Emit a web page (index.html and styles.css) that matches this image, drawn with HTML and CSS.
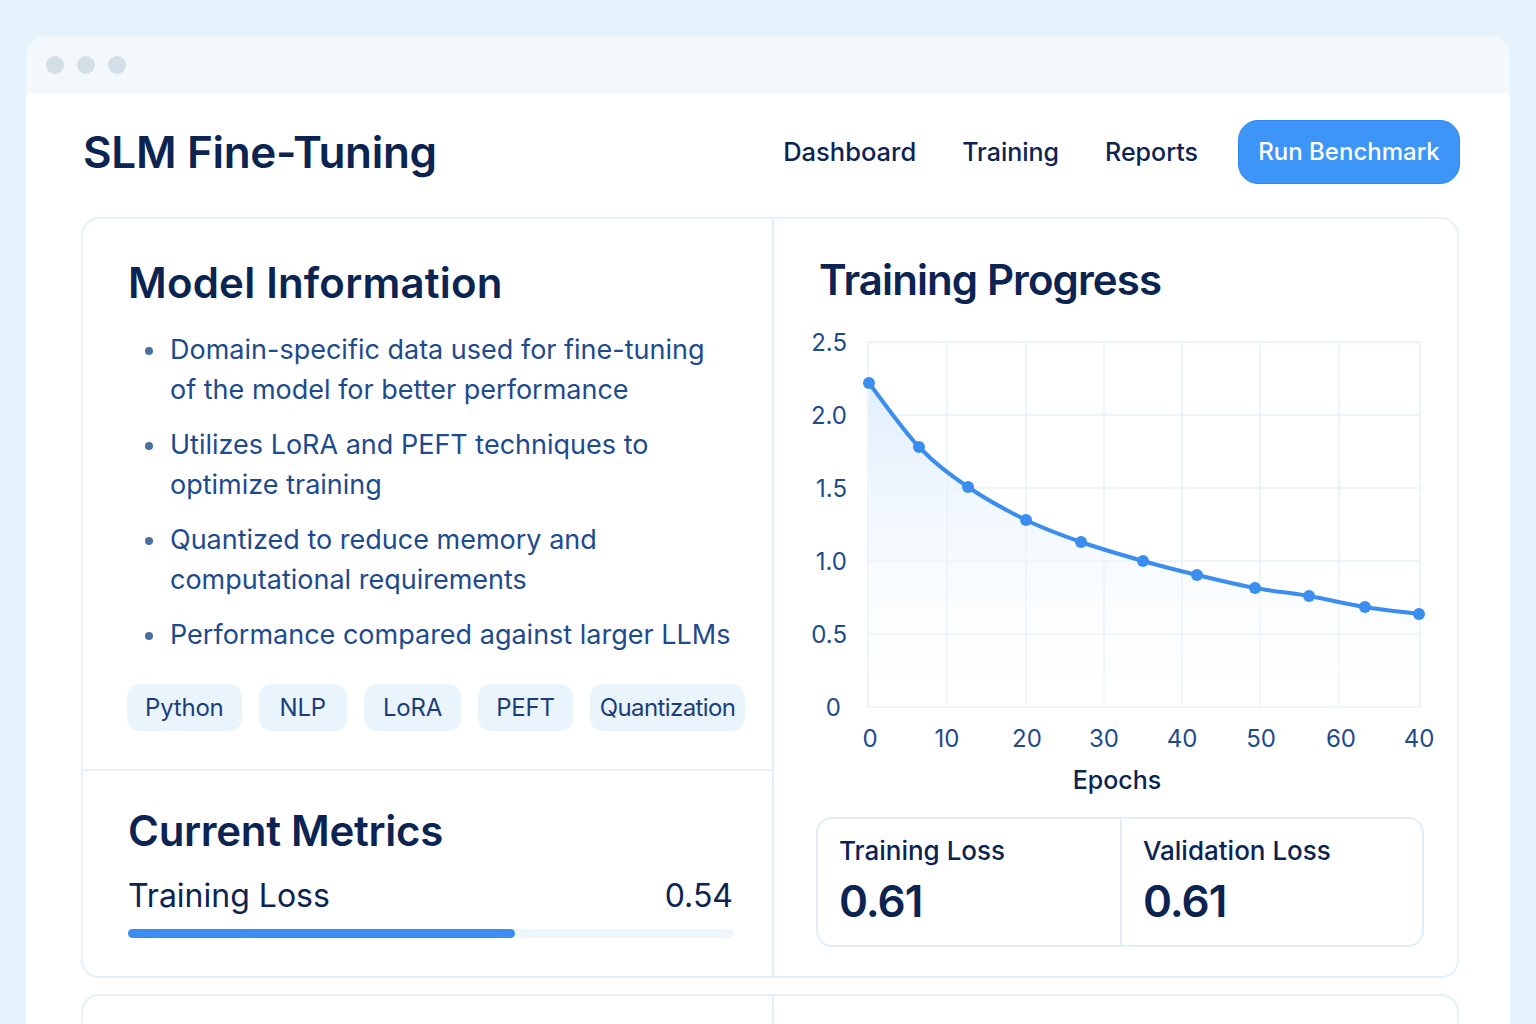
FILE: index.html
```html
<!DOCTYPE html>
<html lang="en">
<head>
<meta charset="utf-8">
<title>SLM Fine-Tuning</title>
<link rel="stylesheet" href="styles.css">
</head>
<body>
<div class="window">
  <div class="titlebar">
    <span class="dot"></span><span class="dot"></span><span class="dot"></span>
  </div>
  <header class="header">
    <h1 class="title">SLM Fine-Tuning</h1>
    <nav class="nav">
      <a class="nav-link">Dashboard</a>
      <a class="nav-link">Training</a>
      <a class="nav-link">Reports</a>
      <button class="btn">Run Benchmark</button>
    </nav>
  </header>

  <section class="card">
    <div class="col-left">
      <div class="panel info">
        <h2 class="panel-title">Model Information</h2>
        <ul class="bullets">
          <li>Domain-specific data used for fine-tuning of the model for better performance</li>
          <li>Utilizes LoRA and PEFT techniques to optimize training</li>
          <li>Quantized to reduce memory and computational requirements</li>
          <li>Performance compared against larger LLMs</li>
        </ul>
        <div class="tags">
          <span class="tag">Python</span>
          <span class="tag tag-nlp">NLP</span>
          <span class="tag tag-lora">LoRA</span>
          <span class="tag">PEFT</span>
          <span class="tag tag-quant">Quantization</span>
        </div>
      </div>
      <div class="panel metrics">
        <h2 class="panel-title">Current Metrics</h2>
        <div class="metric-row">
          <span>Training Loss</span>
          <span>0.54</span>
        </div>
        <div class="bar"><div class="bar-fill" style="width:64%"></div></div>
      </div>
    </div>

    <div class="col-right">
      <h2 class="panel-title progress-title">Training Progress</h2>
      <svg class="chart" width="687" height="475" viewBox="0 0 687 475">
        <defs>
          <linearGradient id="area" x1="0" y1="0" x2="0" y2="1">
            <stop offset="0" stop-color="#dcecfc" stop-opacity="0.9"/>
            <stop offset="1" stop-color="#ffffff" stop-opacity="0.2"/>
          </linearGradient>
        </defs>
        <g class="grid">
          <line x1="95" y1="17" x2="647" y2="17"/>
          <line x1="95" y1="90" x2="647" y2="90"/>
          <line x1="95" y1="163" x2="647" y2="163"/>
          <line x1="95" y1="236" x2="647" y2="236"/>
          <line x1="95" y1="309" x2="647" y2="309"/>
          <line x1="95" y1="382" x2="647" y2="382"/>
          <line x1="95" y1="17" x2="95" y2="382"/>
          <line x1="174" y1="17" x2="174" y2="382"/>
          <line x1="253" y1="17" x2="253" y2="382"/>
          <line x1="331" y1="17" x2="331" y2="382"/>
          <line x1="409" y1="17" x2="409" y2="382"/>
          <line x1="487" y1="17" x2="487" y2="382"/>
          <line x1="566" y1="17" x2="566" y2="382"/>
          <line x1="647" y1="17" x2="647" y2="382"/>
        </g>
        <path class="area" d="M96,58 C104.3,68.7 129.5,104.7 146,122 C162.5,139.3 177.2,149.8 195,162 C212.8,174.2 234.2,185.8 253,195 C271.8,204.2 288.5,210.2 308,217 C327.5,223.8 350.7,230.5 370,236 C389.3,241.5 405.3,245.5 424,250 C442.7,254.5 463.3,259.5 482,263 C500.7,266.5 517.7,267.8 536,271 C554.3,274.2 573.7,279 592,282 C610.3,285 637,287.8 646,289 L646,382 L96,382 Z"/>
        <path class="line" d="M96,58 C104.3,68.7 129.5,104.7 146,122 C162.5,139.3 177.2,149.8 195,162 C212.8,174.2 234.2,185.8 253,195 C271.8,204.2 288.5,210.2 308,217 C327.5,223.8 350.7,230.5 370,236 C389.3,241.5 405.3,245.5 424,250 C442.7,254.5 463.3,259.5 482,263 C500.7,266.5 517.7,267.8 536,271 C554.3,274.2 573.7,279 592,282 C610.3,285 637,287.8 646,289"/>
        <g class="pts">
          <circle cx="96" cy="58" r="6"/>
          <circle cx="146" cy="122" r="6"/>
          <circle cx="195" cy="162" r="6"/>
          <circle cx="253" cy="195" r="6"/>
          <circle cx="308" cy="217" r="6"/>
          <circle cx="370" cy="236" r="6"/>
          <circle cx="424" cy="250" r="6"/>
          <circle cx="482" cy="263" r="6"/>
          <circle cx="536" cy="271" r="6"/>
          <circle cx="592" cy="282" r="6"/>
          <circle cx="646" cy="289" r="6"/>
        </g>
        <g class="ylab">
          <text x="74" y="17">2.5</text>
          <text x="74" y="90">2.0</text>
          <text x="74" y="163">1.5</text>
          <text x="74" y="236">1.0</text>
          <text x="74" y="309">0.5</text>
          <text x="68" y="382">0</text>
        </g>
        <g class="xlab">
          <text x="97" y="413">0</text>
          <text x="174" y="413">10</text>
          <text x="254" y="413">20</text>
          <text x="331" y="413">30</text>
          <text x="409" y="413">40</text>
          <text x="488" y="413">50</text>
          <text x="568" y="413">60</text>
          <text x="646" y="413">40</text>
        </g>
        <text class="axis-title" x="344" y="455">Epochs</text>
      </svg>
      <div class="stats">
        <div class="stat">
          <div class="stat-label">Training Loss</div>
          <div class="stat-value">0.61</div>
        </div>
        <div class="stat">
          <div class="stat-label">Validation Loss</div>
          <div class="stat-value">0.61</div>
        </div>
      </div>
    </div>
  </section>

  <section class="card card-next">
    <div class="col-left"></div>
    <div class="col-right"></div>
  </section>
</div>
</body>
</html>
```
FILE: styles.css
```css
* { box-sizing: border-box; }
html, body { margin: 0; padding: 0; }
body {
  background: #e7f3fc;
  font-family: Inter, "Noto Sans", "Liberation Sans", sans-serif;
  color: #0c2452;
  height: 1024px;
  overflow: hidden;
}
.window {
  margin: 37px 26px 0;
  height: 1000px;
  background: #ffffff;
  border-radius: 18px 18px 0 0;
  overflow: hidden;
}
.titlebar {
  height: 56px;
  background: #f3f8fd;
  display: flex;
  align-items: center;
  gap: 13px;
  padding-left: 20px;
}
.dot {
  width: 18px;
  height: 18px;
  border-radius: 50%;
  background: #d2dfe9;
}
.header {
  display: flex;
  align-items: center;
  justify-content: space-between;
  padding: 27px 50px 0 57px;
  height: 90px;
}
.title {
  margin: 0;
  font-size: 44px;
  font-weight: 600;
  letter-spacing: -0.3px;
  color: #0c2452;
}
.nav {
  display: flex;
  align-items: center;
}
.nav-link {
  font-size: 25px;
  font-weight: 500;
  color: #0c2452;
  margin-right: 46px;
}
.nav-link:first-child { font-size: 25.5px; }
.nav-link:nth-child(3) { margin-right: 40px; }
.btn {
  height: 64px;
  width: 222px;
  border-radius: 20px;
  background: #3d95f7;
  border: 1.5px solid #2e86ee;
  color: #ffffff;
  font-family: inherit;
  font-size: 24px;
  font-weight: 500;
}
.card {
  margin: 34px 51px 0 55px;
  border: 2px solid #e4f1fb;
  border-radius: 18px;
  display: grid;
  grid-template-columns: 691px 1fr;
  height: 761px;
}
.col-left {
  border-right: 2px solid #e4f1fb;
  display: flex;
  flex-direction: column;
}
.panel-title {
  margin: 0;
  font-size: 42px;
  font-weight: 600;
  letter-spacing: -0.3px;
  color: #0c2452;
}
.info {
  padding: 38px 20px 0 45px;
  height: 552px;
  border-bottom: 2px solid #e4f1fb;
}
.info .panel-title { letter-spacing: 0.2px; }
.bullets {
  margin: 22px 0 0;
  padding: 0 0 0 42px;
  list-style: none;
}
.bullets li {
  position: relative;
  max-width: 564px;
  font-size: 27px;
  line-height: 40px;
  color: #1d4b8c;
  margin-bottom: 15px;
}
.bullets li::before {
  content: "";
  position: absolute;
  left: -25px;
  top: 17px;
  width: 8px;
  height: 8px;
  border-radius: 50%;
  background: #4a6fa3;
}
.tags {
  display: flex;
  gap: 17px;
  margin-top: 29px;
  margin-left: -1px;
}
.tag {
  height: 47px;
  padding: 0 18px;
  display: flex;
  align-items: center;
  background: #eaf4fd;
  border-radius: 13px;
  font-size: 24px;
  letter-spacing: -0.2px;
  color: #1c3e78;
}
.tag-nlp { padding: 0 21px; }
.tag-lora { padding: 0 19px; }
.tag-quant { padding: 0 10px; letter-spacing: -0.6px; }
.metrics {
  padding: 34px 39px 0 45px;
}
.metric-row {
  display: flex;
  justify-content: space-between;
  font-size: 32px;
  color: #0c2452;
  margin-top: 20px;
}
.bar {
  margin-top: 14px;
  height: 9px;
  border-radius: 5px;
  background: #edf5fd;
}
.bar-fill {
  height: 100%;
  border-radius: 5px;
  background: #3b8ef0;
}
.col-right {
  display: flex;
  flex-direction: column;
}
.progress-title {
  padding: 35px 0 0 45px;
  letter-spacing: -0.9px;
}
.chart {
  display: block;
  margin-top: 20px;
  margin-left: -1px;
}
.grid line {
  stroke: #e6f1fb;
  stroke-width: 1.5;
}
.area { fill: url(#area); }
.line {
  fill: none;
  stroke: #3b8ef0;
  stroke-width: 4;
  stroke-linecap: round;
}
.pts circle { fill: #3b8ef0; }
.ylab text, .xlab text {
  font-family: Inter, "Noto Sans", sans-serif;
  font-size: 24px;
  fill: #1d4b8c;
  dominant-baseline: central;
}
.ylab text { text-anchor: end; }
.xlab text { text-anchor: middle; }
.axis-title {
  font-family: Inter, "Noto Sans", sans-serif;
  font-size: 25px;
  font-weight: 500;
  fill: #0c2452;
  text-anchor: middle;
  dominant-baseline: central;
}
.stats {
  margin: 17px 36px 0 42px;
  height: 130px;
  border: 2px solid #e2effa;
  border-radius: 16px;
  display: grid;
  grid-template-columns: 302px 1fr;
}
.stat {
  padding: 16px 0 0 21px;
}
.stat + .stat {
  border-left: 2px solid #e2effa;
}
.stat-label {
  font-size: 26px;
  font-weight: 500;
  color: #0c2452;
}
.stat-value {
  margin-top: 8px;
  font-size: 44px;
  font-weight: 600;
  letter-spacing: -1px;
  color: #0c2452;
}
.card-next {
  margin-top: 16px;
  height: 200px;
}
```
